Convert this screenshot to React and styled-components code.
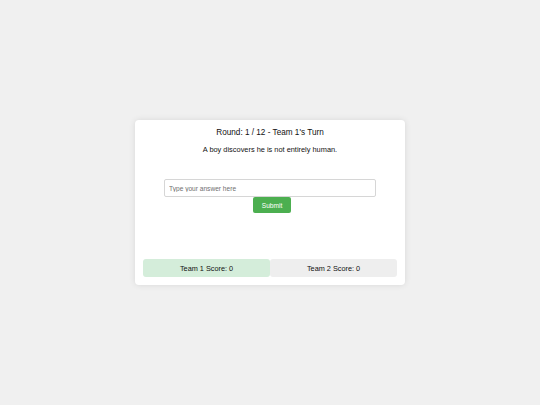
import React from "react";
import styled, { createGlobalStyle } from "styled-components";

const Global = createGlobalStyle`
  html, body { margin: 0; padding: 0; }
  body {
    background: #f0f0f0;
    font-family: "Liberation Sans", Arial, sans-serif;
    color: #222;
  }
`;

const Page = styled.div`
  min-height: 405px;
  display: flex;
  align-items: center;
  justify-content: center;
`;

const Card = styled.div`
  width: 270px;
  box-sizing: border-box;
  background: #fff;
  border-radius: 4px;
  box-shadow: 0 0 6px rgba(0, 0, 0, 0.1);
  padding: 8px 8px 8px;
  display: flex;
  flex-direction: column;
  align-items: center;
`;

const Title = styled.div`
  font-size: 8.2px;
  line-height: 10px;
  height: 10px;
  color: #111;
`;

const Question = styled.div`
  margin-top: 7px;
  font-size: 7.4px;
  line-height: 10px;
  color: #111;
`;

const AnswerForm = styled.div`
  margin-top: 24px;
  display: flex;
  flex-direction: column;
  align-items: center;
`;

const Input = styled.input`
  width: 212px;
  height: 18px;
  box-sizing: border-box;
  border: 1px solid #d6d6d6;
  border-radius: 2px;
  padding: 0 4px;
  font-family: "Liberation Sans", Arial, sans-serif;
  font-size: 6.6px;
  outline: none;
  &::placeholder { color: #6f6f6f; }
`;

const Button = styled.button`
  margin-left: 4px;
  width: 38px;
  height: 16px;
  border: none;
  border-radius: 2px;
  background: #4caf50;
  color: #fff;
  font-family: "Liberation Sans", Arial, sans-serif;
  font-size: 6.6px;
  padding: 0;
`;

const Scores = styled.div`
  margin-top: 46px;
  align-self: stretch;
  display: flex;
  height: 18px;
`;

const Score = styled.div`
  flex: 1;
  display: flex;
  align-items: center;
  justify-content: center;
  border-radius: 3px;
  font-size: 7.3px;
  color: #111;
  background: ${(p) => (p.$active ? "#d4edda" : "#eeeeee")};
`;

export default function App() {
  return (
    <>
      <Global />
      <Page>
        <Card>
          <Title>Round: 1 / 12 - Team 1's Turn</Title>
          <Question>A boy discovers he is not entirely human.</Question>
          <AnswerForm>
            <Input placeholder="Type your answer here" />
            <Button>Submit</Button>
          </AnswerForm>
          <Scores>
            <Score $active>Team 1 Score: 0</Score>
            <Score>Team 2 Score: 0</Score>
          </Scores>
        </Card>
      </Page>
    </>
  );
}
